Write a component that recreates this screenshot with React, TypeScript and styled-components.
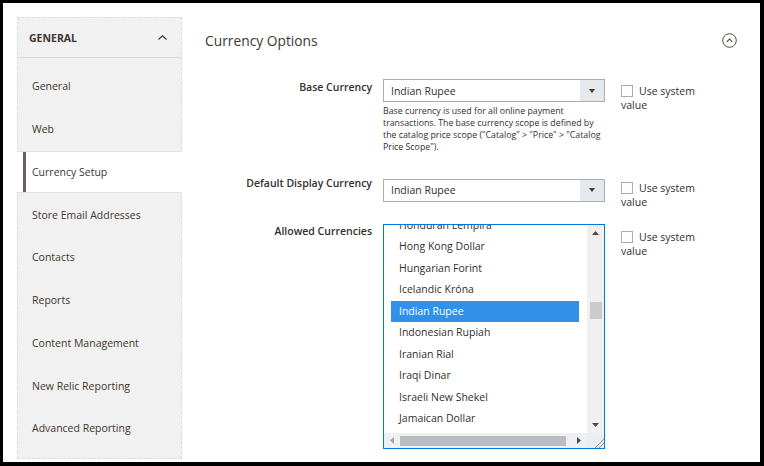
import React from 'react';
import styled, { createGlobalStyle } from 'styled-components';

const Global = createGlobalStyle`
  html, body { margin: 0; padding: 0; background: #fff; }
  body { font-family: "Open Sans", "Liberation Sans", sans-serif; }
  * { box-sizing: border-box; }
`;

const Frame = styled.div`
  width: 764px;
  height: 466px;
  border-style: solid;
  border-color: #000;
  border-width: 3px 4px 4px 3px;
  background: #fff;
  display: flex;
  align-items: flex-start;
  padding: 14px 0 0 14px;
  overflow: hidden;
`;

const Sidebar = styled.nav`
  width: 165px;
  flex: none;
  background: #f1f1f1;
  border: 1px dashed #d3dde4;
`;

const NavHead = styled.div`
  height: 40px;
  display: flex;
  align-items: center;
  justify-content: space-between;
  padding: 0 14px 0 11px;
  border-bottom: 1px solid #d3dde4;
  font-weight: 700;
  font-size: 10.5px;
  color: #41362f;
  text-transform: uppercase;
`;

const NavList = styled.ul`
  list-style: none;
  margin: 0;
  padding: 7px 0 8.5px;
`;

const NavItem = styled.li<{ $active?: boolean }>`
  height: 42.75px;
  display: flex;
  align-items: center;
  font-size: 10.5px;
  color: #41362f;
  padding-left: ${(p) => (p.$active ? '15px' : '14px')};
  margin: ${(p) => (p.$active ? '0 -1px' : '0')};
  background: ${(p) =>
    p.$active
      ? 'linear-gradient(to right, #fff 6px, #6f5d5d 6px, #6f5d5d 8.5px, #fff 8.5px)'
      : 'transparent'};
  border-top: ${(p) => (p.$active ? '1px solid #dbe3e8' : 'none')};
  border-bottom: ${(p) => (p.$active ? '1px solid #dbe3e8' : 'none')};
`;

const Main = styled.main`
  flex: 1;
  padding: 13px 23px 0 23px;
`;

const TitleRow = styled.div`
  height: 20px;
  display: flex;
  align-items: center;
  justify-content: space-between;
`;

const Title = styled.h2`
  margin: 0;
  font-size: 13.8px;
  font-weight: 400;
  color: #41362f;
`;

const Form = styled.div`
  margin-top: 29px;
`;

const Row = styled.div<{ $mb: number }>`
  display: grid;
  grid-template-columns: 167px 222px 100px;
  column-gap: 11px;
  align-items: start;
  margin-bottom: ${(p) => p.$mb}px;
`;

const Label = styled.div<{ $pt: number }>`
  text-align: right;
  font-size: 10.5px;
  font-weight: 600;
  line-height: 14px;
  color: #303030;
  margin-top: ${(p) => p.$pt}px;
`;

const Select = styled.div`
  height: 23px;
  border: 1px solid #adadad;
  display: flex;
  background: #fff;
`;

const SelectValue = styled.span`
  flex: 1;
  padding-left: 7px;
  display: flex;
  align-items: center;
  font-size: 10.5px;
  color: #303030;
`;

const SelectArrow = styled.span`
  width: 24px;
  background: #e4e9ed;
  display: flex;
  align-items: center;
  justify-content: center;
`;

const Note = styled.div`
  margin-top: 4px;
  font-size: 8.8px;
  line-height: 11.9px;
  color: #303030;
`;

const CheckCell = styled.label<{ $pt: number }>`
  margin-left: 5px;
  margin-top: ${(p) => p.$pt}px;
  font-size: 10.5px;
  line-height: 14px;
  color: #303030;
  width: 90px;
`;

const Box = styled.span`
  display: inline-block;
  width: 12px;
  height: 12px;
  border: 1px solid #adadad;
  background: #fff;
  vertical-align: -2px;
  margin-right: 6px;
`;

const Multi = styled.div`
  height: 225px;
  border: 1px solid #007bdb;
  display: grid;
  grid-template-columns: 1fr 17px;
  grid-template-rows: 1fr 15px;
  background: #fff;
`;

const Viewport = styled.div`
  overflow: hidden;
`;

const OptList = styled.ul`
  list-style: none;
  margin: -10px 0 0;
  padding: 0 8px 0 7px;
`;

const Opt = styled.li<{ $sel?: boolean }>`
  height: 21.5px;
  line-height: 21.5px;
  padding-left: 8px;
  font-size: 10.5px;
  white-space: nowrap;
  color: ${(p) => (p.$sel ? '#fff' : '#303030')};
  background: ${(p) => (p.$sel ? '#3190e8' : 'transparent')};
`;

const VScroll = styled.div`
  background: #f0f0f0;
  display: flex;
  flex-direction: column;
`;

const SBtn = styled.div<{ $w?: number; $h?: number }>`
  flex: none;
  width: ${(p) => (p.$w ? `${p.$w}px` : '100%')};
  height: ${(p) => (p.$h ? `${p.$h}px` : '100%')};
  display: flex;
  align-items: center;
  justify-content: center;
`;

const VTrack = styled.div`
  flex: 1;
  padding: 61px 2px 0 3px;
`;

const VThumb = styled.div`
  height: 17px;
  background: #cbcbcb;
`;

const HScroll = styled.div`
  background: #f0f0f0;
  display: flex;
`;

const HTrack = styled.div`
  flex: 1;
  padding: 3px 0 2px;
`;

const HThumb = styled.div`
  height: 100%;
  width: 166px;
  background: #b8bcc3;
`;

const Corner = styled.div`
  background: #e9eef2;
  display: flex;
  align-items: flex-end;
  justify-content: flex-end;
`;

const Tri = ({ dir, color = '#4a4a4a' }: { dir: 'up' | 'down' | 'left' | 'right'; color?: string }) => {
  const pts: Record<string, string> = {
    up: '0,4 7,4 3.5,0',
    down: '0,0 7,0 3.5,4',
    left: '4,0 4,7 0,3.5',
    right: '0,0 0,7 4,3.5',
  };
  const vertical = dir === 'up' || dir === 'down';
  return (
    <svg width={vertical ? 7 : 4} height={vertical ? 4 : 7} viewBox={vertical ? '0 0 7 4' : '0 0 4 7'}>
      <polygon points={pts[dir]} fill={color} />
    </svg>
  );
};

const navItems = [
  'General',
  'Web',
  'Currency Setup',
  'Store Email Addresses',
  'Contacts',
  'Reports',
  'Content Management',
  'New Relic Reporting',
  'Advanced Reporting',
];

const currencies = [
  'Honduran Lempira',
  'Hong Kong Dollar',
  'Hungarian Forint',
  'Icelandic Króna',
  'Indian Rupee',
  'Indonesian Rupiah',
  'Iranian Rial',
  'Iraqi Dinar',
  'Israeli New Shekel',
  'Jamaican Dollar',
  'Japanese Yen',
];

const SelectBox = ({ value }: { value: string }) => (
  <Select>
    <SelectValue>{value}</SelectValue>
    <SelectArrow>
      <svg width="6" height="4" viewBox="0 0 6 4">
        <polygon points="0,0 6,0 3,4" fill="#41362f" />
      </svg>
    </SelectArrow>
  </Select>
);

const UseSystem = ({ pt }: { pt: number }) => (
  <CheckCell $pt={pt}>
    <Box />
    Use system value
  </CheckCell>
);

export default function App() {
  return (
    <>
      <Global />
      <Frame>
        <Sidebar>
          <NavHead>
            <span>General</span>
            <svg width="9" height="5" viewBox="0 0 9 5">
              <polyline points="0.5,4.5 4.5,0.8 8.5,4.5" fill="none" stroke="#41362f" strokeWidth="1.1" />
            </svg>
          </NavHead>
          <NavList>
            {navItems.map((n) => (
              <NavItem key={n} $active={n === 'Currency Setup'}>
                {n}
              </NavItem>
            ))}
          </NavList>
        </Sidebar>
        <Main>
          <TitleRow>
            <Title>Currency Options</Title>
            <svg width="15" height="15" viewBox="0 0 15 15">
              <circle cx="7.5" cy="7.5" r="6.8" fill="none" stroke="#514943" strokeWidth="1" />
              <polyline points="4.8,8.8 7.5,6.1 10.2,8.8" fill="none" stroke="#514943" strokeWidth="1.1" />
            </svg>
          </TitleRow>
          <Form>
            <Row $mb={25}>
              <Label $pt={1}>Base Currency</Label>
              <div>
                <SelectBox value="Indian Rupee" />
                <Note>
                  Base currency is used for all online payment
                  <br />
                  transactions. The base currency scope is defined by
                  <br />
                  the catalog price scope ("Catalog" &gt; "Price" &gt; "Catalog
                  <br />
                  Price Scope").
                </Note>
              </div>
              <UseSystem pt={5} />
            </Row>
            <Row $mb={15}>
              <Label $pt={-3}>Default Display Currency</Label>
              <SelectBox value="Indian Rupee" />
              <UseSystem pt={2} />
            </Row>
            <Row $mb={0}>
              <Label $pt={0}>Allowed Currencies</Label>
              <Multi>
                <Viewport>
                  <OptList>
                    {currencies.map((c) => (
                      <Opt key={c} $sel={c === 'Indian Rupee'}>
                        {c}
                      </Opt>
                    ))}
                  </OptList>
                </Viewport>
                <VScroll>
                  <SBtn $h={16}>
                    <Tri dir="up" />
                  </SBtn>
                  <VTrack>
                    <VThumb />
                  </VTrack>
                  <SBtn $h={16}>
                    <Tri dir="down" />
                  </SBtn>
                </VScroll>
                <HScroll>
                  <SBtn $w={16}>
                    <Tri dir="left" color="#a3a3a3" />
                  </SBtn>
                  <HTrack>
                    <HThumb />
                  </HTrack>
                  <SBtn $w={16}>
                    <Tri dir="right" />
                  </SBtn>
                </HScroll>
                <Corner>
                  <svg width="12" height="11" viewBox="0 0 12 11">
                    <line x1="3" y1="11" x2="12" y2="2" stroke="#8a8f94" strokeWidth="1" />
                    <line x1="7" y1="11" x2="12" y2="6" stroke="#8a8f94" strokeWidth="1" />
                  </svg>
                </Corner>
              </Multi>
              <UseSystem pt={6} />
            </Row>
          </Form>
        </Main>
      </Frame>
    </>
  );
}
